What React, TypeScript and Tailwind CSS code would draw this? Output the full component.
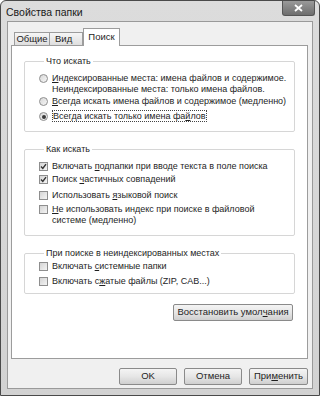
import React from 'react';

function Radio({ checked }: { checked?: boolean }) {
  return (
    <span className="mt-[1px] flex h-[9px] w-[9px] shrink-0 items-center justify-center rounded-full border border-[#8e8e8e] bg-gradient-to-br from-[#d8d8d8] to-[#f6f6f6]">
      {checked && <span className="h-[4px] w-[4px] rounded-full bg-[#3a3a3a]" />}
    </span>
  );
}

function Check({ checked }: { checked?: boolean }) {
  return (
    <span className="mt-[1px] flex h-[9px] w-[9px] shrink-0 items-center justify-center border border-[#8e8e8e] bg-gradient-to-br from-[#d4d4d4] to-[#f4f4f4]">
      {checked && (
        <svg width="7" height="7" viewBox="0 0 7 7">
          <path d="M1 3.6 L2.8 5.4 L6 1.2" fill="none" stroke="#333" strokeWidth="1.4" />
        </svg>
      )}
    </span>
  );
}

function Btn({ children, className = '' }: { children: React.ReactNode; className?: string }) {
  return (
    <div
      className={`flex h-[17px] items-center justify-center rounded-[2px] border border-[#8a8a8a] bg-gradient-to-b from-[#f4f4f4] via-[#e6e6e6] to-[#cfcfcf] text-[9.5px] text-[#1e1e1e] ${className}`}
    >
      {children}
    </div>
  );
}

function Row({ control, children, className = '' }: { control: React.ReactNode; children: React.ReactNode; className?: string }) {
  return (
    <div className={`flex items-start gap-[4px] whitespace-nowrap ${className}`}>
      {control}
      <div className="leading-[11px]">{children}</div>
    </div>
  );
}

export default function App() {
  return (
    <div className="h-[396px] w-[320px] bg-white font-['Liberation_Sans',Arial,sans-serif] text-[9px] text-[#1e1e1e]">
      <div className="flex h-full w-full flex-col rounded-t-[6px] border border-[#4a4a4a] bg-gradient-to-b from-[#dcdcdc] to-[#d2d2d2]">
        {/* title bar */}
        <div className="flex h-[20px] shrink-0 items-start justify-between pl-[5px] pr-[4px]">
          <span className="mt-[5px] text-[10.5px] leading-[12px] text-[#1a1a1a]">Свойства папки</span>
          <div className="flex h-[15px] w-[33px] items-center justify-center rounded-b-[3px] border border-t-0 border-[#555] bg-gradient-to-b from-[#9a9a9a] to-[#6e6e6e]">
            <svg width="9" height="8" viewBox="0 0 9 8">
              <path d="M1 1 L8 7 M8 1 L1 7" stroke="#fff" strokeWidth="1.8" />
            </svg>
          </div>
        </div>

        {/* client area */}
        <div className="mx-[6px] mb-[6px] flex flex-1 flex-col border border-[#9a9a9a] bg-[#f0f0f0] pl-[3px] pr-[4px] pt-[5px]">
          {/* tabs */}
          <div className="flex h-[18px] items-end pl-[3px] text-[9.5px]">
            <div className="flex h-[13px] w-[36px] items-center justify-center border border-b-0 border-[#9c9c9c] bg-gradient-to-b from-[#f6f6f6] to-[#dedede] leading-none">
              Общие
            </div>
            <div className="flex h-[13px] w-[33px] items-center border border-b-0 border-l-0 border-[#9c9c9c] bg-gradient-to-b from-[#f6f6f6] to-[#dedede] pl-[5px] leading-none">
              Вид
            </div>
            <div className="relative z-10 -mb-px flex h-[18px] w-[37px] items-start justify-center border border-b-0 border-[#9c9c9c] bg-white pt-[3px] leading-none">
              Поиск
            </div>
          </div>

          {/* panel */}
          <div className="flex h-[314px] flex-col border border-[#9c9c9c] bg-white px-[12px] pt-[10px]">
            <fieldset className="rounded-[2px] border border-[#d6d6d6] pl-[14px] pr-[4px] pb-[9px]">
              <legend className="ml-[5px] px-[2px] leading-[11px]">Что искать</legend>
              <Row control={<Radio />} className="mt-[6px]">
                <span className="underline">И</span>ндексированные места: имена файлов и содержимое.
                <br />
                Неиндексированные места: только имена файлов.
              </Row>
              <Row control={<Radio />} className="mt-[1px]">
                <span className="underline">В</span>сегда искать имена файлов и содержимое (медленно)
              </Row>
              <Row control={<Radio checked />} className="mt-[4px]">
                <span className="border border-dotted border-[#444]">
                  Всегда искать только имена фа<span className="underline">й</span>лов
                </span>
              </Row>
            </fieldset>

            <fieldset className="mt-[12px] rounded-[2px] border border-[#d6d6d6] pl-[14px] pr-[4px] pb-[9px]">
              <legend className="ml-[5px] px-[2px] leading-[11px]">Как искать</legend>
              <Row control={<Check checked />} className="mt-[6px]">
                Включать <span className="underline">п</span>одпапки при вводе текста в поле поиска
              </Row>
              <Row control={<Check checked />} className="mt-[2px]">
                Поиск <span className="underline">ч</span>астичных совпадений
              </Row>
              <Row control={<Check />} className="mt-[5px]">
                Использовать <span className="underline">я</span>зыковой поиск
              </Row>
              <Row control={<Check />} className="mt-[3px]">
                <span className="underline">Н</span>е использовать индекс при поиске в файловой
                <br />
                системе (медленно)
              </Row>
            </fieldset>

            <fieldset className="mt-[12px] rounded-[2px] border border-[#d6d6d6] pl-[14px] pr-[4px] pb-[6px]">
              <legend className="ml-[5px] px-[2px] leading-[11px]">При поиске в неиндексированных местах</legend>
              <Row control={<Check />} className="mt-[2px]">
                Включать <span className="underline">с</span>истемные папки
              </Row>
              <Row control={<Check />} className="mt-[4px]">
                Включать с<span className="underline">ж</span>атые файлы (ZIP, CAB...)
              </Row>
            </fieldset>

            <div className="mt-[10px] flex justify-end pr-[2px]">
              <Btn className="w-[120px]">
                Восстановить умол<span className="underline">ч</span>ания
              </Btn>
            </div>
          </div>

          {/* dialog buttons */}
          <div className="mt-[9px] flex justify-end gap-[7px]">
            <Btn className="w-[58px]">OK</Btn>
            <Btn className="w-[58px]">Отмена</Btn>
            <Btn className="w-[59px]">
              При<span className="underline">м</span>енить
            </Btn>
          </div>
        </div>
      </div>
    </div>
  );
}
